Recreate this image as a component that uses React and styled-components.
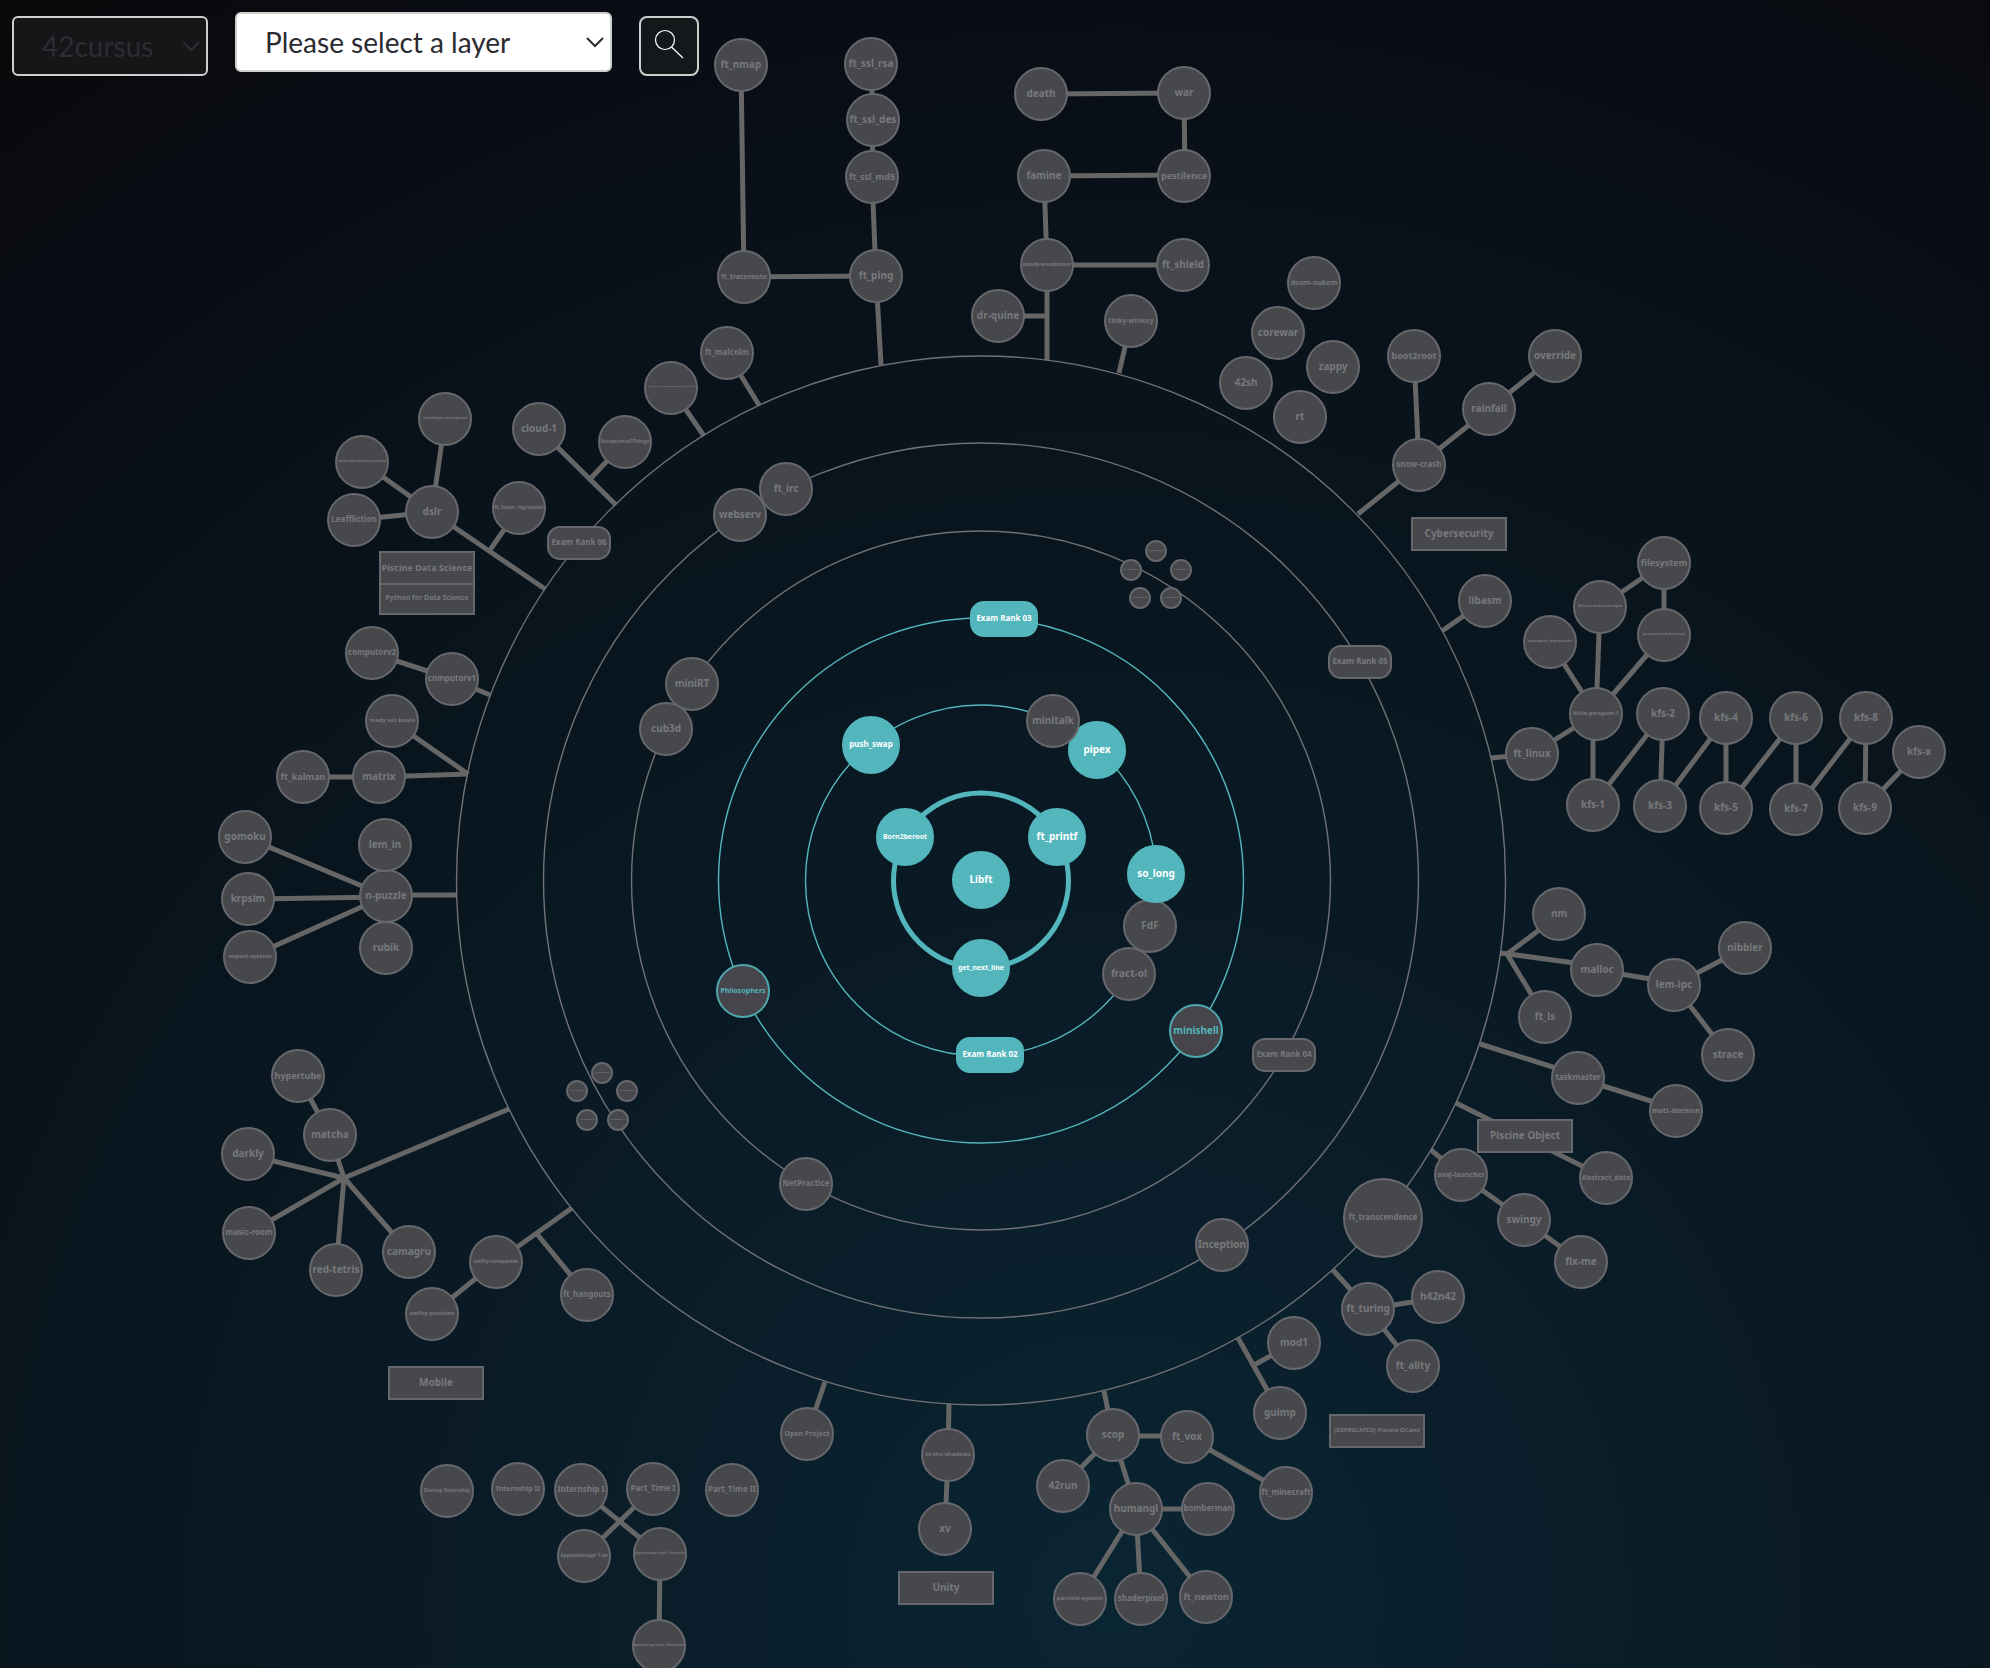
import React from "react";
import styled, { createGlobalStyle } from "styled-components";

const TEAL = "#53b6bc";
const LINE = "#707176";
const LABEL_FONT = '"Noto Sans", "Open Sans", sans-serif';

const GlobalStyle = createGlobalStyle`
  * { box-sizing: border-box; }
  body { margin: 0; background: #0a0c12; }
`;

const Stage = styled.main`
  position: relative;
  display: flex;
  justify-content: center;
  height: 100vh;
  padding-right: 28px;
  overflow: hidden;
  background: radial-gradient(
    circle at 56% 96%,
    #0a2532 0%,
    #0a1d29 26%,
    #09161f 52%,
    #090d15 84%,
    #0a090b 100%
  );
`;

const Toolbar = styled.form`
  position: absolute;
  z-index: 2;
  top: 12px;
  left: 12px;
  display: flex;
  align-items: flex-end;
  gap: 27px;
  height: 64px;
`;

const Field = styled.label`
  position: relative;
  display: block;
  width: ${(p) => p.$width}px;
  height: 60px;
  align-self: ${(p) => (p.$raised ? "flex-start" : "flex-end")};
  color: ${(p) => (p.$light ? "#2a2a30" : "#2c2d32")};
`;

const Select = styled.select`
  appearance: none;
  width: 100%;
  height: 100%;
  padding: 0 28px;
  border: 2px solid #cfcfcd;
  border-radius: 6px;
  background: ${(p) => (p.$light ? "#fff" : "#151618")};
  color: inherit;
  opacity: 1;
  font: 400 28px/32px Lato, "Open Sans", sans-serif;
`;

const Chevron = styled.svg`
  position: absolute;
  top: 24px;
  right: 8px;
  width: 18px;
  height: 12px;
  fill: none;
  stroke: currentColor;
  stroke-width: 2;
  pointer-events: none;
`;

const SearchButton = styled.button`
  display: flex;
  align-items: center;
  justify-content: center;
  width: 60px;
  height: 60px;
  padding: 0 0 4px;
  border: 2px solid #cfcfcd;
  border-radius: 8px;
  background: #14181b;
  color: #fff;
`;

const Board = styled.div`
  position: relative;
  flex: none;
  width: 1962px;
  height: 1760px;
  font-family: ${LABEL_FONT};
`;

const Wires = styled.svg`
  position: absolute;
  inset: 0;
  width: 100%;
  height: 100%;
  fill: none;
`;

const tones = {
  idle: { fill: "#47484c", border: "#67686d", text: "#77787c" },
  open: { fill: "#46454b", border: "#4fa9af", text: TEAL },
  done: { fill: TEAL, border: TEAL, text: "#fff" },
};

const Node = styled.div`
  position: absolute;
  display: flex;
  align-items: center;
  justify-content: center;
  padding-bottom: ${(p) => (p.$small ? 0 : 2)}px;
  border: 2px solid ${(p) => tones[p.$tone].border};
  border-radius: ${(p) => p.$radius};
  background: ${(p) => tones[p.$tone].fill};
  color: ${(p) => tones[p.$tone].text};
  font-weight: 700;
  line-height: 1;
  white-space: nowrap;
`;

const shapes = {
  circle: { w: 54, h: 54, room: 46, radius: "50%" },
  done: { w: 58, h: 58, room: 46, radius: "50%" },
  big: { w: 80, h: 80, room: 72, radius: "50%" },
  mini: { w: 22, h: 22, room: 16, radius: "50%" },
  exam: { w: 64, h: 34, room: 53, radius: "13px" },
  examDone: { w: 68, h: 36, room: 53, radius: "14px" },
  box: { w: 96, h: 34, room: 86, radius: "0" },
};

const rings = [
  { r: 524 },
  { r: 437 },
  { r: 349 },
  { r: 262, lit: true },
  { r: 175, lit: true },
  { r: 87, lit: true, thick: true },
];

const edges = [
  [741, 65, 744, 277], [744, 277, 876, 276], [871, 64, 873, 120], [873, 120, 872, 177],
  [872, 177, 876, 276], [876, 276, 881, 365], [727, 353, 759, 405],
  [1041, 94, 1184, 93], [1184, 93, 1185, 176], [1184, 175, 1044, 176], [1044, 176, 1047, 265],
  [1047, 265, 1183, 265], [1047, 265, 1047, 360], [998, 316, 1047, 316], [1131, 321, 1119, 373],
  [1414, 356, 1419, 465], [1555, 356, 1489, 409], [1489, 409, 1419, 465], [1419, 465, 1358, 514],
  [1485, 601, 1442, 631], [1664, 563, 1600, 607], [1664, 563, 1664, 635], [1600, 607, 1596, 714],
  [1664, 635, 1596, 714], [1550, 642, 1596, 714], [1596, 714, 1532, 754], [1532, 754, 1491, 758],
  [1593, 714, 1593, 805], [1593, 805, 1663, 714], [1663, 714, 1660, 806], [1660, 806, 1726, 718],
  [1726, 718, 1726, 808], [1726, 808, 1796, 718], [1796, 718, 1796, 809], [1796, 809, 1866, 718],
  [1866, 718, 1865, 808], [1865, 808, 1919, 752],
  [1501, 953, 1597, 966], [1559, 915, 1507, 954], [1507, 954, 1545, 1017], [1597, 970, 1674, 983],
  [1674, 985, 1745, 948], [1674, 985, 1728, 1055], [1480, 1044, 1578, 1075], [1578, 1078, 1676, 1109],
  [1456, 1103, 1606, 1178], [1431, 1150, 1461, 1175], [1461, 1175, 1524, 1220], [1524, 1220, 1581, 1262],
  [1333, 1270, 1368, 1309], [1368, 1309, 1438, 1298], [1368, 1309, 1413, 1366],
  [1238, 1338, 1280, 1413], [1294, 1343, 1254, 1365],
  [1104, 1391, 1113, 1435], [1113, 1436, 1187, 1436], [1187, 1437, 1286, 1493], [1113, 1435, 1063, 1486],
  [1113, 1435, 1136, 1509], [1136, 1509, 1208, 1509], [1136, 1509, 1080, 1599], [1136, 1509, 1141, 1599],
  [1136, 1509, 1206, 1597], [949, 1404, 948, 1455], [948, 1455, 945, 1529], [825, 1382, 807, 1434],
  [581, 1490, 660, 1554], [653, 1489, 584, 1556], [660, 1554, 659, 1646],
  [572, 1208, 496, 1262], [496, 1262, 432, 1314], [537, 1234, 587, 1295],
  [509, 1109, 344, 1178], [298, 1076, 330, 1135], [330, 1135, 344, 1178], [344, 1178, 248, 1155],
  [344, 1178, 249, 1233], [344, 1178, 336, 1270], [344, 1178, 409, 1252],
  [457, 895, 386, 895], [386, 896, 245, 837], [386, 897, 248, 899], [386, 896, 250, 957],
  [468, 774, 379, 777], [468, 774, 392, 721], [379, 777, 303, 777],
  [490, 695, 452, 679], [452, 679, 372, 653], [545, 589, 432, 512], [490, 550, 519, 508],
  [432, 512, 354, 520], [432, 512, 362, 462], [432, 512, 445, 419],
  [616, 505, 539, 429], [591, 478, 625, 442], [704, 436, 671, 388],
];

const nodes = [
  ["ft_nmap", 741, 65], ["ft_ssl_rsa", 871, 64], ["ft_ssl_des", 873, 120], ["ft_ssl_md5", 872, 177],
  ["ft_traceroute", 744, 277], ["ft_ping", 876, 276], ["ft_malcolm", 727, 353],
  ["death", 1041, 94], ["war", 1184, 93], ["famine", 1044, 176], ["pestilence", 1184, 176],
  ["woody-woodpacker", 1047, 265], ["ft_shield", 1183, 265], ["dr-quine", 998, 316],
  ["tinky-winkey", 1131, 321], ["doom-nukem", 1314, 283], ["corewar", 1278, 333],
  ["42sh", 1246, 383], ["zappy", 1333, 367], ["rt", 1300, 417],
  ["boot2root", 1414, 356], ["override", 1555, 356], ["rainfall", 1489, 409], ["snow-crash", 1419, 465],
  ["Cybersecurity", 1459, 534, "box"], ["libasm", 1485, 601],
  ["filesystem", 1664, 563], ["drivers-and-interrupts", 1600, 607],
  ["process-and-memory", 1664, 635], ["userspace_digressions", 1550, 642],
  ["little-penguin-1", 1596, 714], ["ft_linux", 1532, 754],
  ["kfs-1", 1593, 805], ["kfs-2", 1663, 714], ["kfs-3", 1660, 806], ["kfs-4", 1726, 718],
  ["kfs-5", 1726, 808], ["kfs-6", 1796, 718], ["kfs-7", 1796, 809], ["kfs-8", 1866, 718],
  ["kfs-9", 1865, 808], ["kfs-x", 1919, 752],
  ["nm", 1559, 914], ["malloc", 1597, 970], ["lem-ipc", 1674, 985], ["nibbler", 1745, 948],
  ["strace", 1728, 1055], ["ft_ls", 1545, 1017], ["taskmaster", 1578, 1078], ["matt-daemon", 1676, 1111],
  ["Piscine Object", 1525, 1136, "box"], ["Abstract_data", 1606, 1178], ["avaj-launcher", 1461, 1175],
  ["swingy", 1524, 1220], ["fix-me", 1581, 1262], ["ft_transcendence", 1383, 1218, "big"],
  ["ft_turing", 1368, 1309], ["h42n42", 1438, 1297], ["ft_ality", 1413, 1366],
  ["[DEPRECATED] Piscine OCaml", 1377, 1431, "box"],
  ["mod1", 1294, 1343], ["guimp", 1280, 1413], ["scop", 1113, 1435], ["ft_vox", 1187, 1437],
  ["42run", 1063, 1486], ["humangl", 1136, 1509], ["bomberman", 1208, 1509],
  ["ft_minecraft", 1286, 1493], ["particle-system", 1080, 1599], ["shaderpixel", 1141, 1599],
  ["ft_newton", 1206, 1597], ["in-the-shadows", 948, 1455], ["xv", 945, 1529],
  ["Unity", 946, 1588, "box"], ["Open Project", 807, 1434],
  ["Startup Internship", 447, 1491], ["Internship II", 518, 1489], ["Internship I", 581, 1490],
  ["Part_Time I", 653, 1489], ["Part_Time II", 732, 1490], ["Apprentissage 1 an", 584, 1556],
  ["Apprentissage 2 ans - 1ère année", 660, 1554], ["Apprentissage 2 ans - 2ème année", 659, 1646],
  ["Mobile", 436, 1383, "box"], ["swifty-companion", 496, 1262], ["swifty-proteins", 432, 1314],
  ["ft_hangouts", 587, 1295], ["hypertube", 298, 1076], ["matcha", 330, 1135], ["darkly", 248, 1154],
  ["music-room", 249, 1233], ["red-tetris", 336, 1270], ["camagru", 409, 1252],
  ["gomoku", 245, 837], ["krpsim", 248, 899], ["expert-system", 250, 957],
  ["n-puzzle", 386, 896], ["lem_in", 385, 845], ["rubik", 386, 948],
  ["ft_kalman", 303, 777], ["matrix", 379, 777], ["ready set boole", 392, 721],
  ["computorv2", 372, 653], ["computorv1", 452, 679],
  ["Python for Data Science", 427, 598, "box"], ["Piscine Data Science", 427, 568, "box"],
  ["dslr", 432, 512], ["Leaffliction", 354, 520], ["total-perspective-vortex", 362, 462],
  ["multilayer-perceptron", 445, 419], ["ft_linear_regression", 519, 508],
  ["cloud-1", 539, 429], ["Inception-of-Things", 625, 442],
  ["Bgp At Doors of Autonomous Systems is Simple", 671, 388],
  ["Exam Rank 06", 579, 543, "exam"], ["webserv", 740, 515], ["ft_irc", 786, 489],
  ["Exam Rank 05", 1360, 662, "exam"], ["Exam Rank 04", 1284, 1055, "exam"],
  ["Inception", 1222, 1245], ["NetPractice", 806, 1184], ["miniRT", 692, 684], ["cub3d", 666, 729],
  ["CPP Module 00", 1156, 551, "mini"], ["CPP Module 01", 1181, 570, "mini"],
  ["CPP Module 02", 1171, 598, "mini"], ["CPP Module 03", 1140, 598, "mini"],
  ["CPP Module 04", 1131, 570, "mini"], ["CPP Module 05", 602, 1073, "mini"],
  ["CPP Module 06", 627, 1091, "mini"], ["CPP Module 07", 618, 1120, "mini"],
  ["CPP Module 08", 587, 1120, "mini"], ["CPP Module 09", 577, 1091, "mini"],
  ["Philosophers", 743, 991, "circle", "open"], ["minishell", 1196, 1031, "circle", "open"],
  ["Exam Rank 03", 1004, 619, "examDone", "done"], ["Exam Rank 02", 990, 1055, "examDone", "done"],
  ["FdF", 1150, 926], ["fract-ol", 1129, 974],
  ["push_swap", 871, 745, "done", "done"], ["pipex", 1097, 750, "done", "done"], ["minitalk", 1053, 721],
  ["so_long", 1156, 874, "done", "done"], ["Born2beroot", 905, 837, "done", "done"],
  ["ft_printf", 1057, 837, "done", "done"], ["Libft", 981, 880, "done", "done"],
  ["get_next_line", 981, 968, "done", "done"],
];

// Labels share a 10px size and step down until they fit inside their shape.
const pen = document.createElement("canvas").getContext("2d");
pen.font = `700 100px ${LABEL_FONT}`;
const fitSize = (label, room) =>
  Math.max(2, Math.min(10, Math.round((room * 100) / pen.measureText(label).width)));

function Project({ label, x, y, shape = "circle", tone = "idle" }) {
  const s = shapes[shape];
  return (
    <Node
      $tone={tone}
      $radius={s.radius}
      $small={shape === "mini"}
      style={{
        left: x - s.w / 2,
        top: y - s.h / 2,
        width: s.w,
        height: s.h,
        fontSize: fitSize(label, s.room),
      }}
    >
      {label}
    </Node>
  );
}

function Dropdown({ name, label, width, light, raised, disabled }) {
  return (
    <Field $width={width} $light={light} $raised={raised}>
      <Select aria-label={name} $light={light} disabled={disabled}>
        <option>{label}</option>
      </Select>
      <Chevron viewBox="0 0 18 12" aria-hidden="true">
        <path d="M1 2l8 8 8-8" />
      </Chevron>
    </Field>
  );
}

export default function App() {
  return (
    <>
      <GlobalStyle />
      <Stage>
        <Toolbar onSubmit={(e) => e.preventDefault()}>
          <Dropdown name="Cursus" label="42cursus" width={196} disabled />
          <Dropdown name="Layer" label="Please select a layer" width={377} light raised />
          <SearchButton type="submit" aria-label="Search">
            <svg width="30" height="30" viewBox="0 0 30 30" fill="none" stroke="currentColor" strokeWidth="1.2">
              <circle cx="11" cy="11" r="9.5" />
              <path d="M17.5 18L29 29" />
            </svg>
          </SearchButton>
        </Toolbar>
        <Board>
          <Wires aria-hidden="true">
            {edges.map(([x1, y1, x2, y2], i) => (
              <line key={i} x1={x1} y1={y1} x2={x2} y2={y2} stroke="#666" strokeWidth="5" />
            ))}
            {rings.map(({ r, lit, thick }) => (
              <circle
                key={r}
                cx="981"
                cy="880.5"
                r={r + 0.5}
                stroke={lit ? TEAL : LINE}
                strokeWidth={thick ? 5 : 1.4}
              />
            ))}
          </Wires>
          {nodes.map(([label, x, y, shape, tone]) => (
            <Project key={label} label={label} x={x} y={y} shape={shape} tone={tone} />
          ))}
        </Board>
      </Stage>
    </>
  );
}
